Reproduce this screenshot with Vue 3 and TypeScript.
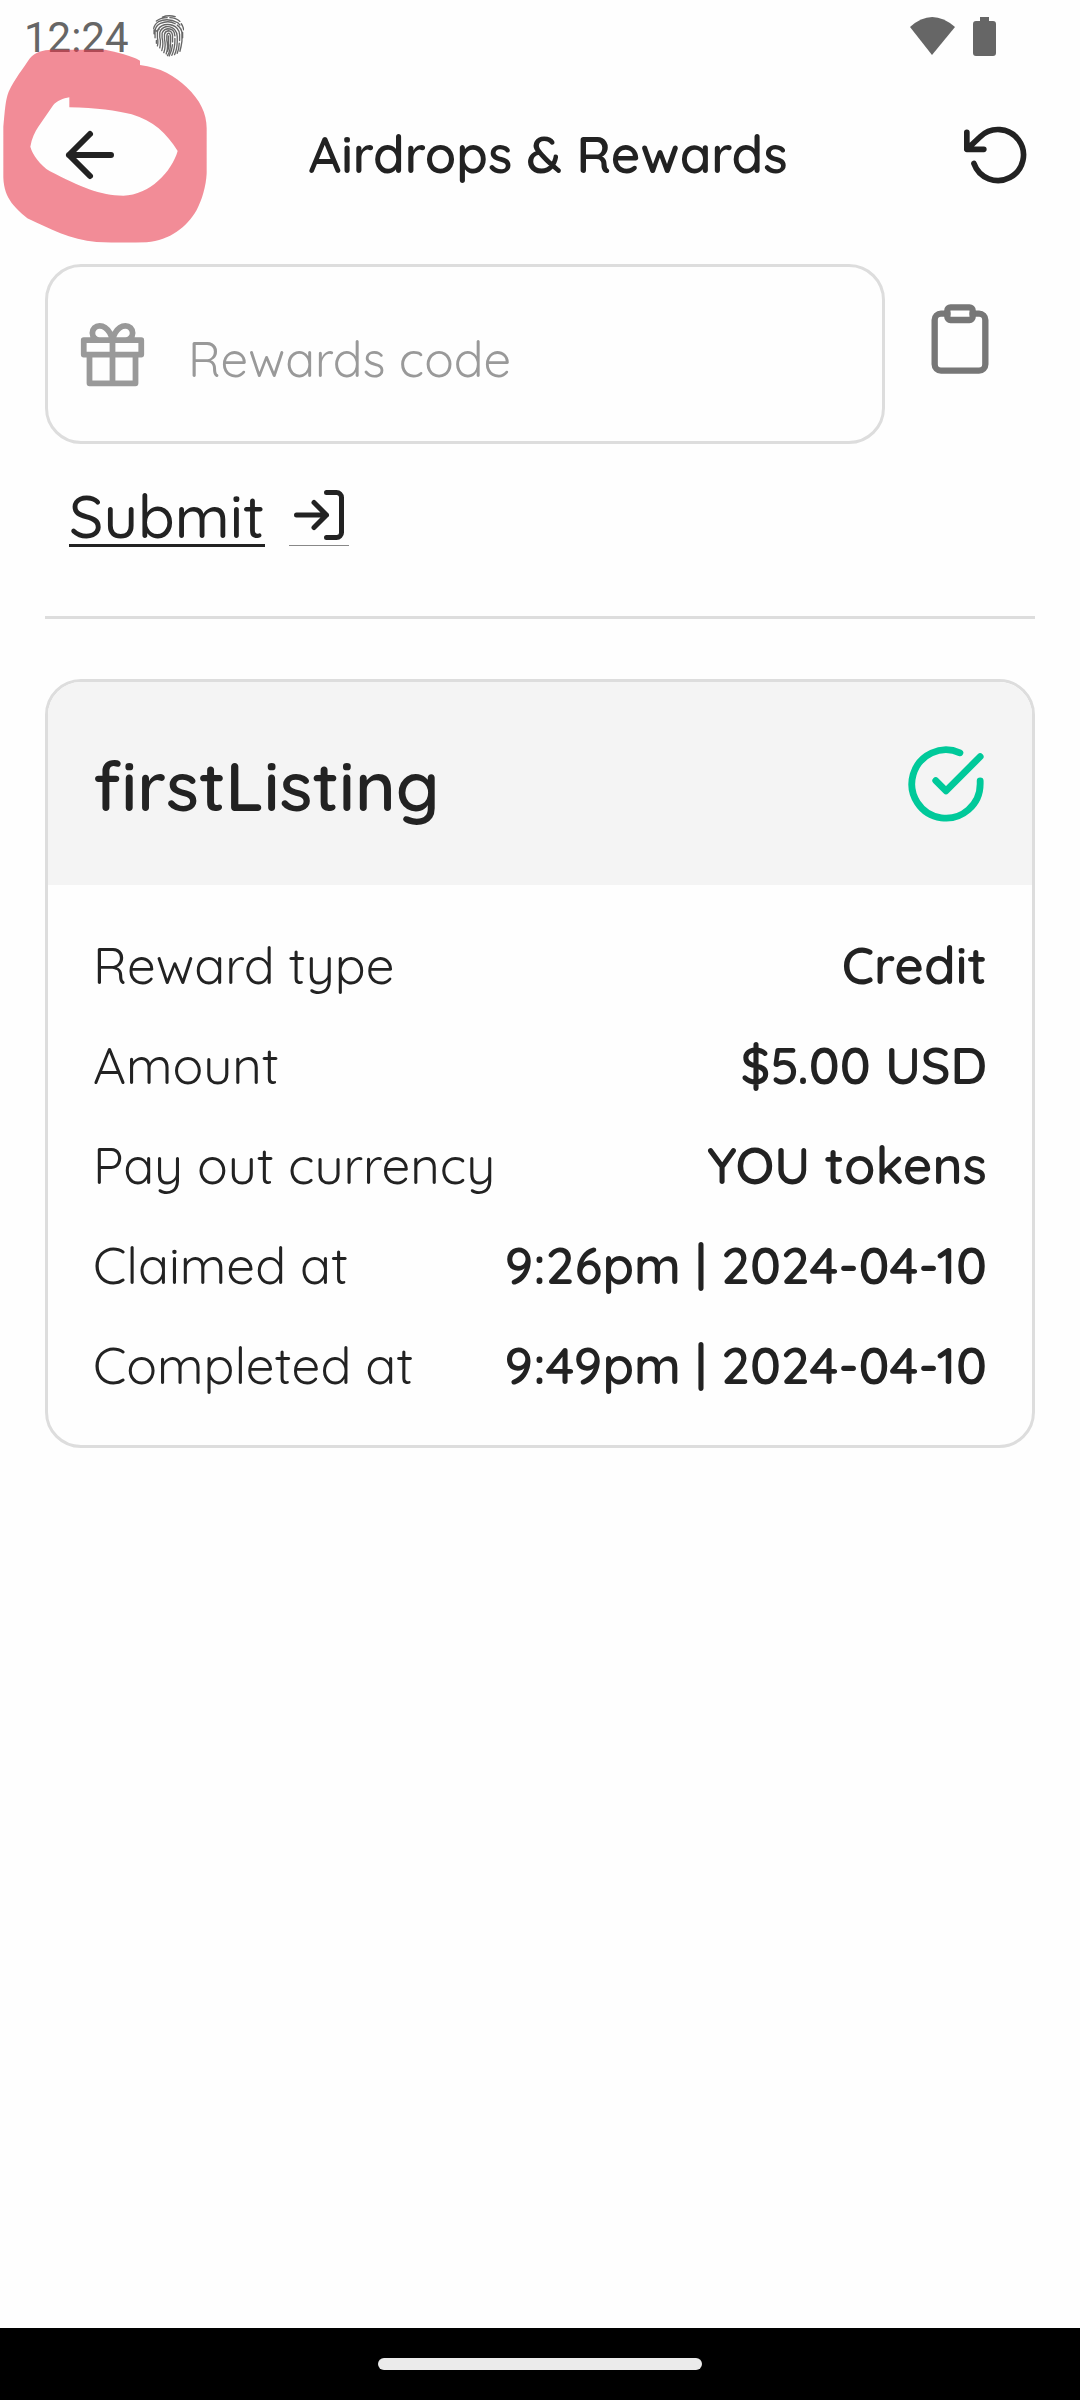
<script setup lang="ts">
import { ref } from 'vue'

interface Detail {
  label: string
  value: string
}

const code = ref('')

const details: Detail[] = [
  { label: 'Reward type', value: 'Credit' },
  { label: 'Amount', value: '$5.00 USD' },
  { label: 'Pay out currency', value: 'YOU tokens' },
  { label: 'Claimed at', value: '9:26pm | 2024-04-10' },
  { label: 'Completed at', value: '9:49pm | 2024-04-10' },
]
</script>

<template>
  <div class="screen">
    <div class="status">
      <span class="time">12:24</span>
      <svg class="finger" viewBox="0 0 92 125" aria-hidden="true">
        <path d="M28 6Q46-1 66 5M10 18Q24 8 42 8M50 8Q68 8 80 19M2 40Q4 28 16 20Q44 7 74 23L80 30M84 26Q90 34 91 44M6 68V48Q7 32 22 25Q46 15 66 26M72 30Q86 40 86 56V78Q84 94 80 108M3 44V56M13 92Q16 80 13 68V50Q16 34 34 29Q58 25 72 40Q80 49 79 62V76M78 84Q77 102 72 114M10 76V84M20 98Q24 82 20 66V52Q24 39 38 35Q56 32 66 46Q72 53 72 64V80Q71 104 64 118M26 106Q32 88 27 68V54Q31 43 44 41Q58 41 63 52L65 62M65 70Q66 98 56 120M32 112Q39 94 34 72V58Q36 48 46 47Q56 48 58 60V80M58 88Q56 106 48 122M39 116Q46 96 41 76V62Q42 54 47 54Q52 55 52 66V84Q52 106 43 121M46 62V84Q48 96 43 108M88 52V68M18 42L10 48" />
      </svg>
      <span class="grow"></span>
      <svg class="wifi" viewBox="0 0 45 38" aria-hidden="true"><path d="M0 10Q22-10 45 10L22 38Z" /></svg>
      <svg class="battery" viewBox="0 0 23 39" aria-hidden="true">
        <path d="M7 0h9v4h4q3 0 3 3v29q0 3-3 3H3q-3 0-3-3V7q0-3 3-3h4z" />
      </svg>
    </div>

    <header class="bar">
      <button class="icon-btn" type="button" aria-label="Back">
        <svg class="feather back" viewBox="0 0 24 24"><path d="M19 12H5M12 19l-7-7 7-7" /></svg>
      </button>
      <h1>Airdrops &amp; Rewards</h1>
      <button class="icon-btn" type="button" aria-label="Reload">
        <svg class="feather reload" viewBox="0 0 24 24">
          <path d="M1 4v6h6M3.51 15a9 9 0 1 0 2.13-9.36L1 10" />
        </svg>
      </button>
    </header>

    <main>
      <form @submit.prevent>
        <div class="entry">
          <label class="field">
            <svg class="feather gift" viewBox="0 0 24 24" aria-hidden="true">
              <path d="M20 12v10H4V12M2 7h20v5H2zM12 22V7M12 7H7.500a2.500 2.500 0 0 1 0-5C11 2 12 7 12 7zM12 7h4.500a2.500 2.500 0 0 0 0-5C13 2 12 7 12 7z" />
            </svg>
            <input v-model="code" type="text" placeholder="Rewards code" aria-label="Rewards code" />
          </label>
          <button class="icon-btn paste" type="button" aria-label="Paste">
            <svg class="feather clip" viewBox="0 0 24 24">
              <path d="M16 4h2a2 2 0 0 1 2 2v14a2 2 0 0 1-2 2H6a2 2 0 0 1-2-2V6a2 2 0 0 1 2-2h2" />
              <rect x="8" y="2" width="8" height="4" rx="1" />
            </svg>
          </button>
        </div>
        <button class="submit" type="submit">
          <span class="submit-text">Submit</span>
          <span class="submit-icon">
            <svg class="feather login" viewBox="0 0 24 24" aria-hidden="true">
              <path d="M15 3h4a2 2 0 0 1 2 2v14a2 2 0 0 1-2 2h-4M10 17l5-5-5-5M15 12H3" />
            </svg>
          </span>
        </button>
      </form>

      <hr />

      <section class="card">
        <div class="card-head">
          <h2>firstListing</h2>
          <svg class="feather check" viewBox="0 0 24 24" role="img" aria-label="Completed">
            <path d="M22 11.08V12a10 10 0 1 1-5.930-9.140M22 4L12 14.010l-3-3" />
          </svg>
        </div>
        <dl>
          <div v-for="d in details" :key="d.label" class="row">
            <dt>{{ d.label }}</dt>
            <dd>{{ d.value }}</dd>
          </div>
        </dl>
      </section>
    </main>

    <div class="nav"><span class="pill"></span></div>

    <svg class="marker" viewBox="0 0 720 750" aria-hidden="true">
      <path
        fill-rule="evenodd"
        d="M420 182V195C480 202 526 228 560 262C600 300 620 340 620 385V520C618 560 606 600 590 630C560 682 510 720 440 727Q360 729 290 726C210 720 150 686 82 655C40 620 8 590 10 520V380C15 330 16 300 26 275C45 235 70 205 88 177C105 155 130 150 155 149H315C350 157 395 166 420 182ZM208 292V322C290 323 350 332 395 343C460 362 500 400 533 453C515 515 450 585 370 587C300 587 240 560 150 514C120 495 98 465 91 440C95 415 105 395 115 380L160 315C170 303 190 295 208 292Z"
      />
    </svg>
  </div>
</template>

<style>
body {
  margin: 0;
  background: #fefefe;
}
</style>

<style scoped>
.screen {
  position: relative;
  display: flex;
  flex-direction: column;
  min-height: 100vh;
  color: #222;
  font-family: Quicksand, Lato, sans-serif;
  font-size: 51px;
}
.status {
  display: flex;
  align-items: center;
  height: 72px;
  padding: 0 84px 0 24px;
  color: #666;
}
.time {
  font: 400 42px/48px Roboto, sans-serif;
  padding-top: 4px;
}
.finger {
  width: 31px;
  height: 42px;
  margin-left: 24px;
  fill: none;
  stroke: #666;
  stroke-width: 4;
  stroke-linecap: round;
}
.grow {
  flex: 1;
}
.wifi {
  width: 45px;
  height: 38px;
  fill: #666;
}
.battery {
  width: 23px;
  height: 39px;
  margin-left: 18px;
  fill: #666;
}
.bar {
  display: flex;
  align-items: center;
  justify-content: space-between;
  height: 166px;
  padding: 0 48px 0 54px;
}
h1,
h2,
dl,
dd {
  margin: 0;
}
h1 {
  padding: 0 0 2px 6px;
  font-size: 51px;
  font-weight: 600;
  line-height: 60px;
}
button {
  padding: 0;
  border: 0;
  background: none;
  color: inherit;
  font: inherit;
}
.icon-btn {
  display: flex;
}
.feather {
  display: block;
  flex: none;
  fill: none;
  stroke: currentColor;
  stroke-width: 2;
  stroke-linecap: round;
  stroke-linejoin: round;
}
.back {
  width: 72px;
  height: 72px;
}
.reload {
  width: 68px;
  height: 68px;
}
main {
  padding: 26px 45px 0;
}
.entry {
  display: flex;
  align-items: flex-start;
  gap: 37px;
}
.field {
  display: flex;
  flex: 1;
  align-items: center;
  gap: 41px;
  box-sizing: border-box;
  min-width: 0;
  height: 180px;
  padding: 0 30px;
  border: 3px solid #ddd;
  border-radius: 36px;
}
.gift {
  width: 69px;
  height: 69px;
  color: #999;
}
input {
  flex: 1;
  min-width: 0;
  padding: 9px 0 0;
  border: 0;
  outline: 0;
  background: none;
  color: #222;
  font: inherit;
  font-size: 49px;
  font-weight: 400;
}
input::placeholder {
  color: #999;
  opacity: 1;
}
.paste {
  margin: 37px 37px 0 0;
  color: #777;
}
.clip {
  width: 76px;
  height: 76px;
}
.submit {
  display: flex;
  align-items: flex-end;
  gap: 24px;
  margin: 38px 24px 0;
}
.submit-text {
  padding-top: 6px;
  font-size: 60px;
  font-weight: 500;
  line-height: 56px;
  border-bottom: 3px solid #222;
}
.submit-icon {
  margin-bottom: 1px;
  border-bottom: 1px solid #888;
}
.login {
  width: 60px;
  height: 60px;
}
hr {
  height: 3px;
  margin: 69px 0 60px;
  border: 0;
  background: #ddd;
}
.card {
  overflow: hidden;
  border: 3px solid #ddd;
  border-radius: 36px;
}
.card-head {
  display: flex;
  align-items: center;
  justify-content: space-between;
  height: 203px;
  padding: 0 45px;
  background: #f4f4f4;
}
h2 {
  padding-top: 2px;
  font-size: 69px;
  font-weight: 600;
  line-height: 80px;
}
.check {
  width: 82px;
  height: 82px;
  color: #00c99a;
}
dl {
  display: flex;
  flex-direction: column;
  gap: 40px;
  padding: 50px 45px;
}
.row {
  display: flex;
  justify-content: space-between;
  line-height: 60px;
}
dt {
  font-weight: 400;
}
dd {
  font-weight: 600;
}
.nav {
  display: flex;
  align-items: center;
  justify-content: center;
  height: 72px;
  margin-top: auto;
  background: #000;
}
.pill {
  width: 30%;
  height: 12px;
  border-radius: 6px;
  background: #ebebeb;
}
.marker {
  position: absolute;
  top: 0;
  left: 0;
  width: 240px;
  height: 250px;
  fill: rgba(233, 53, 72, 0.57);
  pointer-events: none;
}
</style>
